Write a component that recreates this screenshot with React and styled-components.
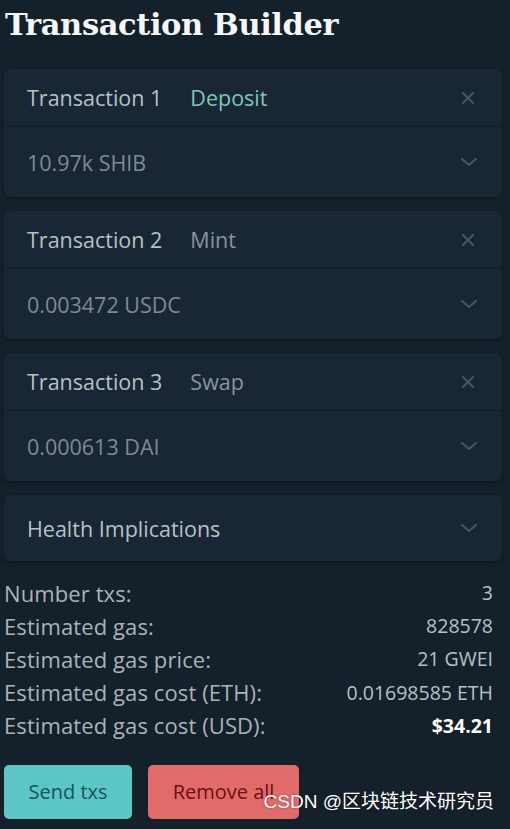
import React from "react";
import styled, { createGlobalStyle } from "styled-components";

const GlobalStyle = createGlobalStyle`
  html, body {
    margin: 0;
    padding: 0;
    background: #14202a;
  }
  body {
    font-family: "Open Sans", "Noto Sans", sans-serif;
  }
`;

const transactions = [
  { id: 1, action: "Deposit", amount: "10.97k SHIB", highlight: true },
  { id: 2, action: "Mint", amount: "0.003472 USDC" },
  { id: 3, action: "Swap", amount: "0.000613 DAI" },
];

const stats = [
  { label: "Number txs:", value: "3" },
  { label: "Estimated gas:", value: "828578" },
  { label: "Estimated gas price:", value: "21 GWEI" },
  { label: "Estimated gas cost (ETH):", value: "0.01698585 ETH" },
  { label: "Estimated gas cost (USD):", value: "$34.21", strong: true },
];

const CloseIcon = () => (
  <svg width="16" height="16" viewBox="0 0 16 16" fill="none">
    <path d="M3 3L13 13M13 3L3 13" stroke="#47555e" strokeWidth="2.2" strokeLinecap="round" />
  </svg>
);

const ChevronIcon = () => (
  <svg width="18" height="12" viewBox="0 0 18 12" fill="none">
    <path d="M2 3L9 9L16 3" stroke="#47555e" strokeWidth="2.2" strokeLinecap="round" strokeLinejoin="round" />
  </svg>
);

const App = () => {
  return (
    <>
      <GlobalStyle />
      <Page>
        <Title>Transaction Builder</Title>
        <CardList>
          {transactions.map((tx) => (
            <Card key={tx.id}>
              <CardHeader>
                <HeaderLeft>
                  <TxName>Transaction {tx.id}</TxName>
                  <TxAction $highlight={tx.highlight}>{tx.action}</TxAction>
                </HeaderLeft>
                <IconButton>
                  <CloseIcon />
                </IconButton>
              </CardHeader>
              <CardBody>
                <Amount>{tx.amount}</Amount>
                <IconButton>
                  <ChevronIcon />
                </IconButton>
              </CardBody>
            </Card>
          ))}
          <Card>
            <HealthRow>
              <TxName>Health Implications</TxName>
              <IconButton>
                <ChevronIcon />
              </IconButton>
            </HealthRow>
          </Card>
        </CardList>
        <Stats>
          {stats.map((s) => (
            <StatRow key={s.label}>
              <span>{s.label}</span>
              <StatValue $strong={s.strong}>{s.value}</StatValue>
            </StatRow>
          ))}
        </Stats>
        <Actions>
          <ActionBtn $variant="send">Send txs</ActionBtn>
          <ActionBtn $variant="remove">Remove all</ActionBtn>
        </Actions>
        <Watermark>CSDN @区块链技术研究员</Watermark>
      </Page>
    </>
  );
};

const Page = styled.div`
  position: relative;
  width: 510px;
  height: 829px;
  box-sizing: border-box;
  padding: 0 17px 0 4px;
  background: #14202a;
  overflow: hidden;
`;

const Title = styled.h1`
  margin: 0;
  padding: 4px 0 0 1px;
  font-family: "DejaVu Serif", "Liberation Serif", serif;
  font-size: 30.5px;
  font-weight: 700;
  line-height: 40px;
  color: #f4f6f7;
  letter-spacing: -0.4px;
`;

const CardList = styled.div`
  display: flex;
  flex-direction: column;
  gap: 14px;
  margin: 25px -9px 0 0;
`;

const Card = styled.div`
  background: #182733;
  border-radius: 6px;
  box-shadow: 0 1px 3px rgba(0, 0, 0, 0.35);
`;

const CardHeader = styled.div`
  display: flex;
  align-items: center;
  justify-content: space-between;
  height: 57px;
  padding: 0 26px 0 23px;
  border-bottom: 1px solid #121d26;
`;

const HeaderLeft = styled.div`
  display: flex;
  align-items: center;
  gap: 28px;
`;

const TxName = styled.span`
  font-size: 21.5px;
  color: #b9c1c7;
`;

const TxAction = styled.span`
  font-size: 21.5px;
  color: ${(p) => (p.$highlight ? "#7ec6ba" : "#8a949b")};
`;

const CardBody = styled.div`
  display: flex;
  align-items: center;
  justify-content: space-between;
  height: 70px;
  padding: 0 24px 0 23px;
`;

const Amount = styled.span`
  font-size: 21.5px;
  color: #7f8a92;
`;

const HealthRow = styled.div`
  display: flex;
  align-items: center;
  justify-content: space-between;
  height: 66px;
  padding: 0 24px 0 23px;
`;

const IconButton = styled.span`
  display: flex;
  align-items: center;
  justify-content: center;
`;

const Stats = styled.div`
  display: flex;
  flex-direction: column;
  margin-top: 15px;
`;

const StatRow = styled.div`
  display: flex;
  justify-content: space-between;
  align-items: center;
  height: 33.2px;
  font-size: 22px;
  letter-spacing: 0.1px;
  color: #aab3ba;
`;

const StatValue = styled.span`
  font-size: 19.5px;
  letter-spacing: 0;
  color: ${(p) => (p.$strong ? "#ffffff" : "#b8c0c6")};
  font-weight: ${(p) => (p.$strong ? 700 : 400)};
`;

const Actions = styled.div`
  display: flex;
  gap: 16px;
  margin-top: 23px;
`;

const ActionBtn = styled.button`
  height: 54px;
  padding: 0 ${(p) => (p.$variant === "send" ? "24px" : "22px")};
  min-width: ${(p) => (p.$variant === "send" ? "128px" : "151px")};
  border: none;
  border-radius: 5px;
  font-family: "Open Sans", "Noto Sans", sans-serif;
  font-size: 20px;
  background: ${(p) => (p.$variant === "send" ? "#5cc6c6" : "#e06b68")};
  color: ${(p) => (p.$variant === "send" ? "#14545a" : "#6b0f12")};
`;

const Watermark = styled.div`
  position: absolute;
  right: 16px;
  bottom: 16px;
  font-family: "Liberation Sans", "Noto Sans CJK SC", sans-serif;
  font-size: 19px;
  color: #ffffff;
  text-shadow: 0 0 2px rgba(0, 0, 0, 0.4);
`;

export default App;
